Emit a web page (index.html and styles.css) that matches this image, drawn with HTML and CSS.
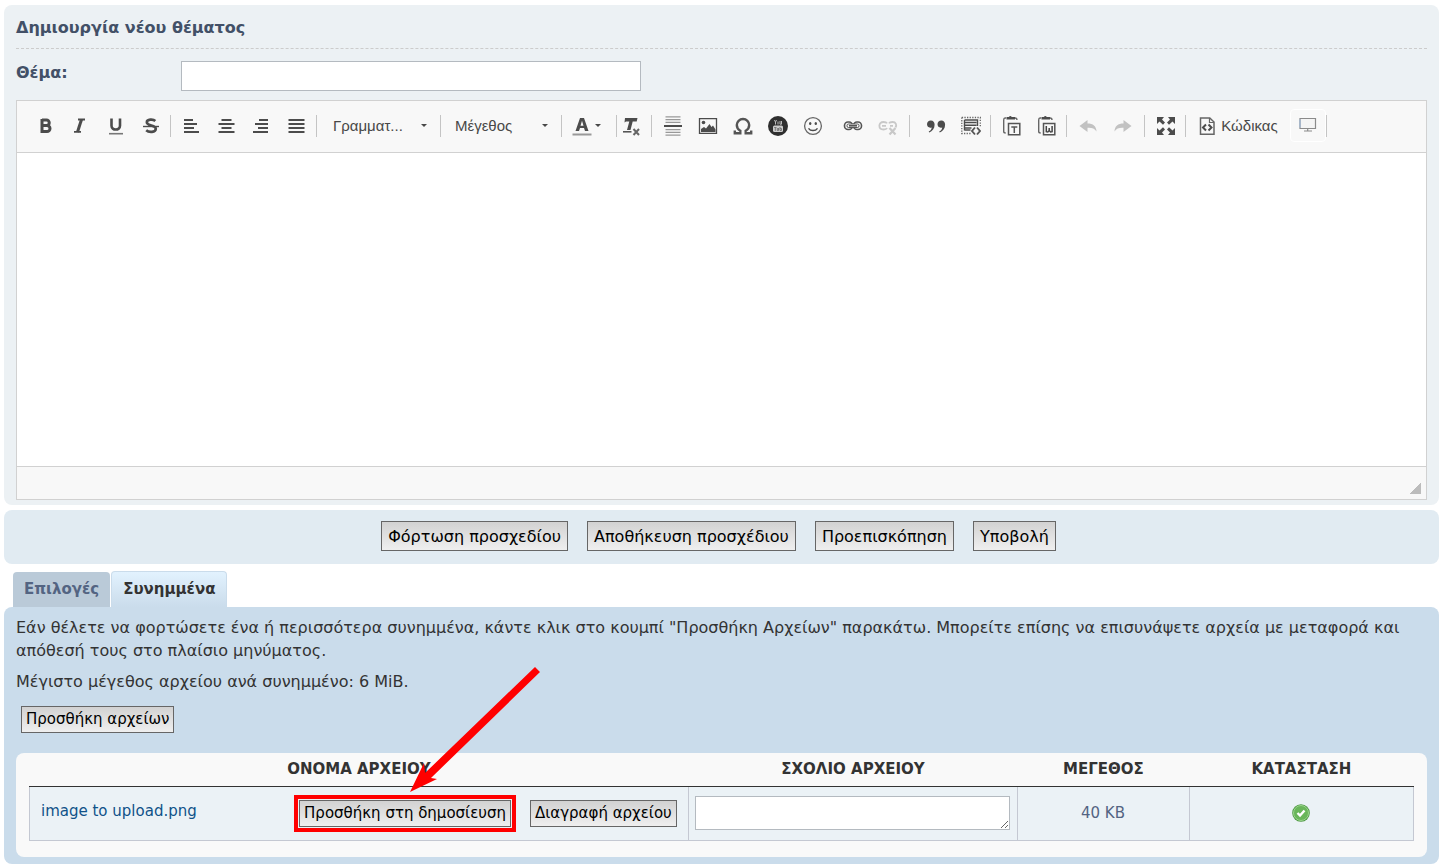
FILE: index.html
```html
<!DOCTYPE html>
<html lang="el">
<head>
<meta charset="utf-8">
<meta name="viewport" content="width=device-width, initial-scale=1">
<title>Δημιουργία νέου θέματος</title>
<link rel="stylesheet" href="styles.css">
</head>
<body>
<form class="posting">
  <section class="panel panel-post">
    <h1 class="panel-title">Δημιουργία νέου θέματος</h1>
    <div class="subject-row">
      <label class="subject-label" for="subject">Θέμα:</label>
      <input class="subject-input" id="subject" type="text">
    </div>
    <div class="editor">
      <div class="toolbar" role="toolbar" aria-label="Μορφοποίηση">
        <button type="button" class="tool" aria-label="Έντονα"><svg class="icon" viewBox="0 0 20 20"><path fill="none" stroke="#4c4c4c" stroke-width="3" d="M6 4h4.500a2.600 2.600 0 0 1 0 5.500H6h5a3 3 0 0 1 0 6H6V3"/></svg></button>
        <button type="button" class="tool" aria-label="Πλάγια"><svg class="icon" viewBox="0 0 20 20"><path fill="none" stroke="#4c4c4c" stroke-width="1.800" d="M7 3.500h7M3 15.800h7"/><path stroke="#4c4c4c" stroke-width="3" d="M10.500 3.500L6.500 16"/></svg></button>
        <button type="button" class="tool" aria-label="Υπογράμμιση"><svg class="icon" viewBox="0 0 20 20"><path fill="none" stroke="#4c4c4c" stroke-width="2.600" d="M5.500 2.500v7.300c0 5 8.500 5 8.500 0V2.500"/><path stroke="#777" stroke-width="1.600" d="M3 17.700h14"/></svg></button>
        <button type="button" class="tool" aria-label="Διαγραφή κειμένου"><svg class="icon" viewBox="0 0 20 20"><path fill="none" stroke="#4c4c4c" stroke-width="2.600" d="M14.300 5c-2-2-8.500-2-8.500 1.300 0 4 9 2.500 9 6.500 0 3.800-7 3.800-9.600 1.500"/><path stroke="#4c4c4c" stroke-width="1.400" d="M2 10.500h16"/></svg></button>
        <span class="sep"></span>
        <button type="button" class="tool" aria-label="Στοίχιση αριστερά"><svg class="icon" viewBox="0 0 20 20"><path stroke="#4c4c4c" stroke-width="2" d="M2 4h9M2 8h13M2 12h10M2 16h15"/></svg></button>
        <button type="button" class="tool" aria-label="Στοίχιση στο κέντρο"><svg class="icon" viewBox="0 0 20 20"><path stroke="#4c4c4c" stroke-width="2" d="M4.500 4h10M1.500 8h16M4.500 12h10M1.500 16h16"/></svg></button>
        <button type="button" class="tool" aria-label="Στοίχιση δεξιά"><svg class="icon" viewBox="0 0 20 20"><path stroke="#4c4c4c" stroke-width="2" d="M7 4h9M3 8h13M6 12h10M1 16h15"/></svg></button>
        <button type="button" class="tool" aria-label="Πλήρης στοίχιση"><svg class="icon" viewBox="0 0 20 20"><path stroke="#4c4c4c" stroke-width="2" d="M1.500 4h16M1.500 8h16M1.500 12h16M1.500 16h16"/></svg></button>
        <span class="sep"></span>
        <button type="button" class="combo combo-font"><span>Γραμματ...</span><span class="caret"></span></button>
        <span class="sep"></span>
        <button type="button" class="combo combo-size"><span>Μέγεθος</span><span class="caret"></span></button>
        <span class="sep"></span>
        <button type="button" class="tool tool-color" aria-label="Χρώμα κειμένου"><svg class="icon" viewBox="0 0 20 20"><path fill="#4c4c4c" fill-rule="evenodd" d="M8 2h4l4.500 13h-3.500l-1-3h-4l-1 3H3.500zM10 4.800L8.500 9.800h3z"/><path stroke="#999" stroke-width="2" d="M.5 18.500h19"/></svg><span class="caret"></span></button>
        <span class="sep"></span>
        <button type="button" class="tool tool-clear" aria-label="Καθαρισμός μορφοποίησης"><svg class="icon" viewBox="0 0 20 20"><path fill="#4c4c4c" d="M4 2h12.500l-.8 3.500h-4L9.500 14H6L8.300 5.500H5L3.500 6.500z"/><path fill="none" stroke="#4c4c4c" stroke-width="1.500" d="M2 15.800h8.500"/><path fill="none" stroke="#666" stroke-width="2" d="M12.500 13l5.500 6M18 13l-5.500 6"/></svg></button>
        <span class="sep"></span>
        <button type="button" class="tool" aria-label="Οριζόντια γραμμή"><svg class="icon" viewBox="0 0 20 20"><path stroke="#999" stroke-width="1.200" d="M2.500.8h15M2.500 3.600h15M2.500 6.400h15M2.500 13.600h15M2.500 16.400h15M2.500 19.200h15"/><path stroke="#4c4c4c" stroke-width="2" d="M1 10h18"/></svg></button>
        <button type="button" class="tool" aria-label="Εικόνα"><svg class="icon" viewBox="0 0 20 20"><path fill="none" stroke="#4c4c4c" stroke-width="1.300" d="M1.500 2.700h17v14.600h-17z"/><circle cx="5.500" cy="6.500" r="1.800" fill="#4c4c4c"/><path fill="#4c4c4c" d="M3 16v-3l3-2 2 1.500L11.500 8l2 3 1.500-1.500 2.500 4V16z"/></svg></button>
        <button type="button" class="tool" aria-label="Σύμβολο"><svg class="icon" viewBox="0 0 20 20"><path fill="none" stroke="#555" stroke-width="2.400" d="M1.800 14.500v2.700h5.500v-2.500c-2-1-3.500-3-3.500-5.600C3.800 5.700 6.500 3 10 3s6.200 2.700 6.200 6.100c0 2.600-1.500 4.600-3.500 5.600v2.500h5.500v-2.700"/></svg></button>
        <button type="button" class="tool" aria-label="YouTube"><svg class="icon" viewBox="0 0 20 20"><circle cx="10" cy="10" r="10" fill="#2f2f2f"/><rect x="5" y="9.500" width="10" height="6.500" rx="1.500" fill="#ccc"/><path fill="none" stroke="#bbb" d="M6.500 4l1 2.200 1-2.200M7.500 6v2.500M10 5.500v3M12 5v3.200h1.500V5"/><path fill="none" stroke="#777" d="M6.200 11.500h2.300M7.300 11.500v3.300M9.300 12v2.500h1.200V12M12 11v3.500h1.500v-2H12"/></svg></button>
        <button type="button" class="tool" aria-label="Εικονίδιο διάθεσης"><svg class="icon" viewBox="0 0 20 20"><circle cx="10" cy="10" r="8.400" fill="none" stroke="#666" stroke-width="1.300"/><ellipse cx="7.200" cy="7.600" rx="1.200" ry="1.500" fill="#4c4c4c"/><ellipse cx="12.800" cy="7.600" rx="1.200" ry="1.500" fill="#4c4c4c"/><path fill="none" stroke="#4c4c4c" stroke-width="1.400" d="M5.500 12.300c2 3 7 3 9 0"/></svg></button>
        <span class="gap"></span>
        <button type="button" class="tool" aria-label="Σύνδεσμος"><svg class="icon" viewBox="0 0 20 20"><g fill="none" stroke="#555" stroke-width="1.600"><rect x="1.500" y="6" width="8" height="7.500" rx="3.500"/><rect x="10.500" y="6" width="8" height="7.500" rx="3.500"/><rect x="4" y="8" width="12" height="3.500" rx="1.500" fill="#f8f8f8" stroke-width="1"/><path d="M6 9.800h8"/></g></svg></button>
        <button type="button" class="tool" aria-label="Αφαίρεση συνδέσμου" disabled><svg class="icon" viewBox="0 0 20 20"><g fill="none" stroke="#c8c8c8" stroke-width="1.800"><path d="M9 7.300C8.500 6.300 7.500 6 5.500 6 0 6 0 13.500 5.500 13.500c2 0 3-.3 3.500-1.500M11 7.300C11.500 6.300 12.500 6 14.500 6c3.500 0 4.500 3 3 5.500M4 9.800h4M12 9.800h3"/><path stroke-width="2.200" d="M11.500 12l6 6.500M17.500 12l-6 6.500"/></g></svg></button>
        <span class="gap gap-small"></span>
        <span class="sep"></span>
        <span class="gap"></span>
        <button type="button" class="tool" aria-label="Παράθεση"><svg class="icon" viewBox="0 0 20 20"><path fill="#4c4c4c" d="M4.800 4.500c2.500 0 3.800 1.700 3.800 4.200 0 3.800-2.200 6.500-5.300 7.800l-.6-1c2-1.200 3-2.600 3-4.100C3 12.300 1 10.600 1 8.300c0-2.300 1.700-3.800 3.800-3.800zM15.300 4.500c2.500 0 3.800 1.700 3.800 4.200 0 3.800-2.200 6.500-5.300 7.800l-.6-1c2-1.200 3-2.600 3-4.100-2.700.9-4.700-.8-4.700-3.100 0-2.300 1.700-3.800 3.800-3.800z"/></svg></button>
        <button type="button" class="tool" aria-label="Προβολή τμημάτων"><svg class="icon" viewBox="0 0 20 20"><path fill="none" stroke="#666" stroke-width="1.300" stroke-dasharray="1.300 1.300" d="M.8 1.500h18.500v9M.8 1.500v16H10"/><path fill="none" stroke="#4c4c4c" stroke-width="1.400" d="M3.500 4h13v6M3.500 6.500h12M3.500 9.300h12M3.500 12h7M3.500 14h6M3.500 4v10.500"/><path fill="none" stroke="#555" stroke-width="1.900" d="M14 11.500L11 15l3 3.500M16 11.500l3 3.500-3 3.500"/></svg></button>
        <span class="sep"></span>
        <button type="button" class="tool" aria-label="Επικόλληση ως κείμενο"><svg class="icon" viewBox="0 0 20 20"><path fill="none" stroke="#666" stroke-width="1.400" d="M4 2H3Q1.700 2 1.700 4v11.500q0 1.500 2 1.500M13 2q2 0 2 2"/><path fill="#4c4c4c" d="M4.500 1h2.300q1.500-2 3 0H13v2.500H4.500z"/><path fill="none" stroke="#555" stroke-width="1.500" d="M6.500 7.500h11.300v11.300H6.500z"/><path fill="none" stroke="#555" stroke-width="1.500" d="M9.300 11h6M12.300 11v6"/></svg></button>
        <button type="button" class="tool" aria-label="Επικόλληση από το Word"><svg class="icon" viewBox="0 0 20 20"><path fill="none" stroke="#666" stroke-width="1.400" d="M4 2H3Q1.700 2 1.700 4v11.500q0 1.500 2 1.500M13 2q2 0 2 2"/><path fill="#4c4c4c" d="M4.500 1h2.300q1.500-2 3 0H13v2.500H4.500z"/><path fill="none" stroke="#555" stroke-width="1.500" d="M6.500 7.500h11.300v11.300H6.500z"/><path fill="none" stroke="#444" stroke-width="1.500" d="M9.300 10v5.700l1.500.3 1.400-1.500 1.400 1.500 1.500-.3V10M12.200 12v3"/></svg></button>
        <span class="sep"></span>
        <button type="button" class="tool" aria-label="Αναίρεση" disabled><svg class="icon" viewBox="0 0 20 20"><path fill="#c2c2c2" d="M1.500 10L9.500 4v3.500c5.500 0 8.800 2.500 9 8-2-3.200-5-4-9-3.700V16z"/></svg></button>
        <button type="button" class="tool" aria-label="Επανάληψη" disabled><svg class="icon" viewBox="0 0 20 20"><path fill="#c2c2c2" d="M18.500 10l-8-6v3.500c-5.500 0-8.800 2.500-9 8 2-3.200 5-4 9-3.700V16z"/></svg></button>
        <span class="gap gap-small"></span>
        <span class="sep"></span>
        <button type="button" class="tool" aria-label="Μεγιστοποίηση"><svg class="icon" viewBox="0 0 20 20"><path fill="#4c4c4c" d="M1 1h7L6 3.500l3 3L7 8.800 3.500 5.500 1 8zM19 1v7l-2.500-2.500L13 8.800l-2-2.300 3-3L12 1zM1 19v-7l2.500 2.500L7 11.200l2 2.300-3 3L8 19zM19 19h-7l2-2.500-3-3 2-2.300 3.500 3.300L19 12z"/></svg></button>
        <span class="sep"></span>
        <button type="button" class="tool tool-source"><svg class="icon" viewBox="0 0 20 20"><path fill="none" stroke="#666" stroke-width="1.500" d="M3.500 2h9.300L17 6v12.300H3.500z"/><path fill="none" stroke="#666" stroke-width="1.200" d="M12.500 2v4.500H17"/><path fill="none" stroke="#4c4c4c" stroke-width="2" d="M9 8.500l-3 3 3 3M11.500 8.500l3 3-3 3"/></svg><span>Κώδικας</span></button>
        <button type="button" class="tool tool-preview" aria-label="Προεπισκόπηση οθόνης"><svg class="icon" viewBox="0 0 20 20"><path fill="#f4f4f4" stroke="#8a8a8a" stroke-width="1.200" d="M2 2.500h15.500v10H2z"/><path stroke="#9ab8dd" stroke-width="1" d="M2 3.500v8"/><path fill="none" stroke="#8a8a8a" stroke-width="1.200" d="M9.700 12.500V15M6 15h8"/></svg></button>
        <span class="sep sep-last"></span>
      </div>
      <textarea class="editor-body" aria-label="Μήνυμα"></textarea>
      <div class="editor-foot"><span class="grip"></span></div>
    </div>
  </section>

  <section class="panel panel-submit">
    <button type="button" class="btn btn-large">Φόρτωση προσχεδίου</button>
    <button type="button" class="btn btn-large">Αποθήκευση προσχέδιου</button>
    <button type="button" class="btn btn-large">Προεπισκόπηση</button>
    <button type="button" class="btn btn-large">Υποβολή</button>
  </section>

  <nav class="tabs">
    <a class="tab" href="#options">Επιλογές</a>
    <a class="tab tab-active" href="#attachments">Συνημμένα</a>
  </nav>

  <section class="panel panel-attach" id="attachments">
    <p class="note">Εάν θέλετε να φορτώσετε ένα ή περισσότερα συνημμένα, κάντε κλικ στο κουμπί "Προσθήκη Αρχείων" παρακάτω. Μπορείτε επίσης να επισυνάψετε αρχεία με μεταφορά και απόθεσή τους στο πλαίσιο μηνύματος.</p>
    <p class="note">Μέγιστο μέγεθος αρχείου ανά συνημμένο: 6 MiB.</p>
    <button type="button" class="btn btn-add">Προσθήκη αρχείων</button>
    <div class="files">
      <table class="file-table">
        <colgroup><col class="col-name"><col class="col-comment"><col class="col-size"><col class="col-status"></colgroup>
        <thead>
          <tr><th>ΟΝΟΜΑ ΑΡΧΕΙΟΥ</th><th>ΣΧΟΛΙΟ ΑΡΧΕΙΟΥ</th><th>ΜΕΓΕΘΟΣ</th><th>ΚΑΤΑΣΤΑΣΗ</th></tr>
        </thead>
        <tbody>
          <tr>
            <td>
              <div class="file-cell">
                <a class="file-link" href="#file">image to upload.png</a>
                <span class="callout">
                  <button type="button" class="btn">Προσθήκη στη δημοσίευση</button>
                  <svg class="arrow" viewBox="0 0 136 130" aria-hidden="true"><path fill="#f00" d="M4 127L18 98l1 10L129 2l5 5L25 113l6 1z"/></svg>
                </span>
                <button type="button" class="btn">Διαγραφή αρχείου</button>
              </div>
            </td>
            <td><textarea class="comment" aria-label="Σχόλιο αρχείου"></textarea></td>
            <td class="center">40 KB</td>
            <td class="center"><svg class="status" viewBox="0 0 18 18" role="img" aria-label="Ολοκληρώθηκε"><circle cx="9" cy="9" r="8.800" fill="#4f9a44"/><circle cx="9" cy="9" r="7.500" fill="#69b65a" stroke="#9ad58c"/><path fill="none" stroke="#fff" stroke-width="2.400" d="M5.500 9l2.500 2.500 4.500-5"/></svg></td>
          </tr>
        </tbody>
      </table>
    </div>
  </section>
</form>
</body>
</html>
```
FILE: styles.css
```css
* { box-sizing: border-box; }

body {
  margin: 0;
  padding: 5px 5px 4px 4px;
  background: #fff;
  color: #333;
  font-family: Verdana, "DejaVu Sans", sans-serif;
  font-size: 16px;
}

button, input, textarea { font-family: inherit; margin: 0; }

.panel { border-radius: 8px; padding: 0 12px; }

.panel-post { background: #ecf1f4; padding-bottom: 5px; color: #425067; }

.panel-title {
  margin: 0;
  padding: 11px 0 8px;
  border-bottom: 1px dashed #ccc;
  font-size: 16px;
  line-height: 24px;
}

.subject-row { display: flex; padding: 12px 0 9px; }
.subject-label { width: 165px; font-weight: bold; line-height: 24px; }
.subject-input {
  width: 460px;
  height: 30px;
  border: 1px solid #b4bac0;
  background: #fff;
}

.editor { border: 1px solid #d1d1d1; background: #fff; }

.toolbar {
  display: flex;
  align-items: center;
  padding: 8px 11px 10px;
  background: #f8f8f8;
  border-bottom: 1px solid #d1d1d1;
  font-family: "Liberation Sans", Arial, sans-serif;
}

.tool, .combo {
  display: flex;
  align-items: center;
  justify-content: center;
  flex: none;
  width: 35px;
  height: 33px;
  padding: 0;
  border: 0;
  background: none;
  color: #484848;
  font-size: 15px;
}
.icon { width: 20px; height: 20px; flex: none; }

.sep { flex: none; width: 1px; height: 22px; margin: 0 3px 0 2px; background: #c4c4c4; }
.sep-last { margin: 0; }
.gap { flex: none; width: 5px; }
.gap-small { width: 2px; }

.caret {
  width: 0;
  height: 0;
  border: 3px solid transparent;
  border-top-color: #484848;
  border-bottom: 0;
}

.combo { justify-content: space-between; padding: 0 11px 0 13px; }
.combo-font { width: 118px; }
.combo-size { width: 115px; padding-left: 11px; }
.tool-color { width: 49px; gap: 3px; justify-content: flex-start; padding-left: 7px; }
.tool-clear { width: 29px; padding-right: 8px; }
.tool-source { width: 101px; gap: 4px; padding-right: 4px; }
.tool-preview { width: 36px; border: 1px solid #fff; border-radius: 4px; }

.editor-body {
  display: block;
  width: 100%;
  height: 313px;
  border: 0;
  resize: none;
  outline: 0;
}
.editor-foot {
  display: flex;
  justify-content: flex-end;
  align-items: flex-end;
  height: 33px;
  padding: 5px;
  background: #f8f8f8;
  border-top: 1px solid #d1d1d1;
}
.grip { width: 12px; height: 12px; background: linear-gradient(135deg, transparent 50%, #bcbcbc 50%); }

.panel-submit {
  display: flex;
  justify-content: center;
  gap: 19px;
  margin-top: 5px;
  padding: 11px 18px 13px 12px;
  background: #e1ebf2;
}

.btn {
  padding: 3px 4px;
  border: 1px solid #666;
  background: linear-gradient(#d2d2d2, #efefef);
  color: #000;
  font-size: 15px;
  line-height: 19px;
  white-space: nowrap;
}
.btn-large { padding: 4px 6px 2px; font-size: 16px; line-height: 22px; }

.tabs { display: flex; align-items: flex-end; gap: 1px; margin-top: 7px; padding-left: 9px; }
.tab {
  padding: 6px 11px;
  border-radius: 4px 4px 0 0;
  background: #bacad8;
  color: #536482;
  font-size: 15px;
  font-weight: bold;
  line-height: 23px;
  text-decoration: none;
}
.tab-active {
  border: 1px solid #cadceb;
  border-bottom: 0;
  background: linear-gradient(#e2f2fe, #cadceb);
  color: #333;
}

.panel-attach { background: #cadceb; padding: 9px 12px 7px; }
.note { margin: 0 0 8px; line-height: 23px; }
.btn-add { display: block; margin: 13px 5px 20px; }

.files { padding: 0 13px 16px; border-radius: 8px; background: #f9f9f9; }
.file-table { width: 100%; table-layout: fixed; border-collapse: collapse; }
.col-name { width: 47.6%; }
.col-comment { width: 23.8%; }
.col-size { width: 12.4%; }
.col-status { width: 16.2%; }
.file-table th { padding: 0; height: 33px; border-bottom: 1px solid #333; font-size: 15px; }
.file-table td {
  height: 54px;
  padding: 0 7px 0 6px;
  border: 1px solid #c4c8d2;
  border-top-color: #333;
  background: #ebf2f6;
  color: #536482;
  font-size: 15px;
}
.file-table .center { text-align: center; }

.file-cell { display: flex; align-items: center; padding: 0 4px 0 5px; }
.file-link { flex: 1; padding-bottom: 5px; color: #105289; text-decoration: none; }
.callout { position: relative; display: flex; margin-right: 19px; }
.callout::after {
  content: "";
  position: absolute;
  inset: -5px;
  border: 4px solid #f00;
  pointer-events: none;
}
.arrow { position: absolute; left: 107px; bottom: 32px; width: 136px; height: 130px; pointer-events: none; z-index: 1; }

.comment {
  display: block;
  width: 100%;
  height: 34px;
  border: 1px solid #b4bac0;
  background: #fff;
  resize: vertical;
}
.status { display: inline-block; width: 18px; height: 18px; vertical-align: middle; }
```
